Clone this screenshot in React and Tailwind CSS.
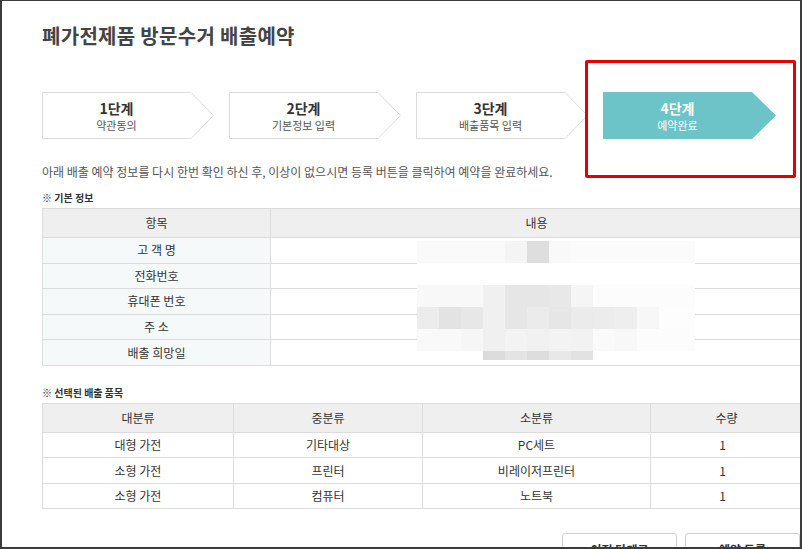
import React from 'react';

const steps = [
  { no: '1단계', label: '약관동의' },
  { no: '2단계', label: '기본정보 입력' },
  { no: '3단계', label: '배출품목 입력' },
  { no: '4단계', label: '예약완료', active: true },
];

const infoRows = ['고 객 명', '전화번호', '휴대폰 번호', '주 소', '배출 희망일'];

const items = [
  ['대형 가전', '기타대상', 'PC세트', '1'],
  ['소형 가전', '프린터', '비레이저프린터', '1'],
  ['소형 가전', '컴퓨터', '노트북', '1'],
];

// blurred personal data (mosaic blocks)
const mosaic = [
  { h: 'h-[22px]', cells: [['w-[88px]', 'bg-[#fafafa]'], ['w-[22px]', 'bg-[#f4f4f4]'], ['w-[22px]', 'bg-[#dedede]'], ['w-[22px]', 'bg-[#f9f9f9]'], ['w-[124px]', 'bg-[#fbfbfb]']] },
  { h: 'h-[22px]', cells: [['w-[278px]', 'bg-white']] },
  { h: 'h-[22px]', cells: [['w-[66px]', 'bg-[#f8f8f8]'], ['w-[22px]', 'bg-[#f0f0f0]'], ['w-[22px]', 'bg-[#e6e6e6]'], ['w-[22px]', 'bg-[#e6e6e6]'], ['w-[22px]', 'bg-[#e8e8e8]'], ['w-[22px]', 'bg-[#f5f5f5]'], ['w-[102px]', 'bg-[#fcfcfc]']] },
  { h: 'h-[22px]', cells: [['w-[22px]', 'bg-[#ececec]'], ['w-[22px]', 'bg-[#e3e3e3]'], ['w-[22px]', 'bg-[#e7e7e7]'], ['w-[22px]', 'bg-[#f0f0f0]'], ['w-[22px]', 'bg-[#e6e6e6]'], ['w-[22px]', 'bg-[#ebebeb]'], ['w-[22px]', 'bg-[#e6e6e6]'], ['w-[22px]', 'bg-[#ebebeb]'], ['w-[22px]', 'bg-[#ececec]'], ['w-[22px]', 'bg-[#eeeeee]'], ['w-[22px]', 'bg-[#f7f7f7]'], ['w-[36px]', 'bg-[#fdfdfd]']] },
  { h: 'h-[22px]', cells: [['w-[44px]', 'bg-[#f9f9f9]'], ['w-[22px]', 'bg-[#f6f6f6]'], ['w-[22px]', 'bg-[#f0f0f0]'], ['w-[22px]', 'bg-[#f3f3f3]'], ['w-[22px]', 'bg-[#f1f1f1]'], ['w-[22px]', 'bg-[#f3f3f3]'], ['w-[22px]', 'bg-[#f2f2f2]'], ['w-[22px]', 'bg-[#fafafa]'], ['w-[22px]', 'bg-[#f8f8f8]'], ['w-[58px]', 'bg-[#fcfcfc]']] },
  { h: 'h-[9px]', cells: [['w-[66px]', ''], ['w-[22px]', 'bg-[#dcdcdc]'], ['w-[22px]', 'bg-[#e4e4e4]'], ['w-[22px]', 'bg-[#dddddd]'], ['w-[22px]', 'bg-[#e8e8e8]'], ['w-[22px]', 'bg-[#e2e2e2]']] },
];

const Step = ({ step }) => (
  <div className="relative w-[173px] h-[47px] shrink-0">
    <svg className="absolute inset-0" width="173" height="47" viewBox="0 0 173 47">
      {step.active ? (
        <polygon points="0,0 149,0 173,23.5 149,47 0,47" fill="#6cc4c9" />
      ) : (
        <polygon points="0.5,0.5 149,0.5 171.5,23.5 149,46.5 0.5,46.5" fill="#fff" stroke="#dcdcdc" />
      )}
    </svg>
    <div className={`relative w-[149px] h-full flex flex-col items-center justify-center ${step.active ? 'text-white' : 'text-[#333]'}`}>
      <div className="text-[14px] font-bold leading-[18px]">{step.no}</div>
      <div className={`text-[11px] leading-[15px] mt-[1px] ${step.active ? 'text-white' : 'text-[#555]'}`}>{step.label}</div>
    </div>
  </div>
);

export default function App() {
  return (
    <div className="w-[802px] h-[549px] bg-white overflow-hidden">
      <div className="relative w-[802px] h-[549px] border-l-2 border-r-2 border-t border-b-2 border-[#3c3c3c] overflow-hidden font-['Noto_Sans_CJK_KR',sans-serif] text-[#333]">
        <div className="pl-[40px] pt-[20px] w-[800px]">
          <h1 className="text-[20px] font-bold leading-[30px] text-[#444] tracking-[0.3px]">폐가전제품 방문수거 배출예약</h1>

          <div className="flex gap-[14px] mt-[41px]">
            {steps.map(s => <Step key={s.no} step={s} />)}
          </div>

          <p className="mt-[24px] text-[12px] leading-[18px] text-[#555]">
            아래 배출 예약 정보를 다시 한번 확인 하신 후, 이상이 없으시면 등록 버튼을 클릭하여 예약을 완료하세요.
          </p>

          <div className="mt-[9px] text-[10px] font-bold leading-[16px] text-[#333]">※ 기본 정보</div>

          <div className="relative mt-[2px] w-[760px]">
            <div className="border-t border-l border-[#dcdcdc] text-[12px] text-[#333]">
              <div className="flex h-[29px] bg-[#efefef] border-b border-[#dcdcdc]">
                <div className="w-[228px] flex items-center justify-center border-r border-[#dcdcdc]">항목</div>
                <div className="flex-1 flex items-center justify-center">내용</div>
              </div>
              {infoRows.map(r => (
                <div key={r} className="flex h-[25.6px] border-b border-[#dcdcdc]">
                  <div className="w-[228px] flex items-center justify-center bg-[#f5f9fa] border-r border-[#dcdcdc]">{r}</div>
                  <div className="flex-1 bg-white" />
                </div>
              ))}
            </div>
            <div className="absolute left-[375px] top-[33px] flex flex-col">
              {mosaic.map((row, i) => (
                <div key={i} className={`flex ${row.h}`}>
                  {row.cells.map((c, j) => <div key={j} className={`${c[0]} h-full ${c[1]}`} />)}
                </div>
              ))}
            </div>
          </div>

          <div className="mt-[19px] text-[10px] font-bold leading-[16px] text-[#333]">※ 선택된 배출 품목</div>

          <div className="mt-[2px] w-[760px] border-t border-l border-[#dcdcdc] text-[12px] text-[#333]">
            <div className="flex h-[29px] bg-[#efefef] border-b border-[#dcdcdc]">
              <div className="w-[191px] flex items-center justify-center border-r border-[#dcdcdc]">대분류</div>
              <div className="w-[189px] flex items-center justify-center border-r border-[#dcdcdc]">중분류</div>
              <div className="w-[228px] flex items-center justify-center border-r border-[#dcdcdc]">소분류</div>
              <div className="flex-1 flex items-center justify-center">수량</div>
            </div>
            {items.map((it, i) => (
              <div key={i} className="flex h-[25.5px] border-b border-[#dcdcdc]">
                <div className="w-[191px] flex items-center justify-center border-r border-[#dcdcdc]">{it[0]}</div>
                <div className="w-[189px] flex items-center justify-center border-r border-[#dcdcdc]">{it[1]}</div>
                <div className="w-[228px] flex items-center justify-center border-r border-[#dcdcdc]">{it[2]}</div>
                <div className="flex-1 flex items-center justify-center pr-[8px]">{it[3]}</div>
              </div>
            ))}
          </div>

          <div className="mt-[24px] w-[758px] flex justify-end gap-[8px]">
            <button className="w-[115px] h-[34px] bg-white border border-[#cfcfcf] rounded-[3px] text-[12px] font-bold text-[#333]">이전 단계로</button>
            <button className="w-[115px] h-[34px] bg-white border border-[#cfcfcf] rounded-[3px] text-[12px] font-bold text-[#333]">예약 등록</button>
          </div>
        </div>

        <div className="absolute left-[583px] top-[59px] w-[211px] h-[118px] border-[3px] border-[#e40000] rounded-[2px]" />
      </div>
    </div>
  );
}
